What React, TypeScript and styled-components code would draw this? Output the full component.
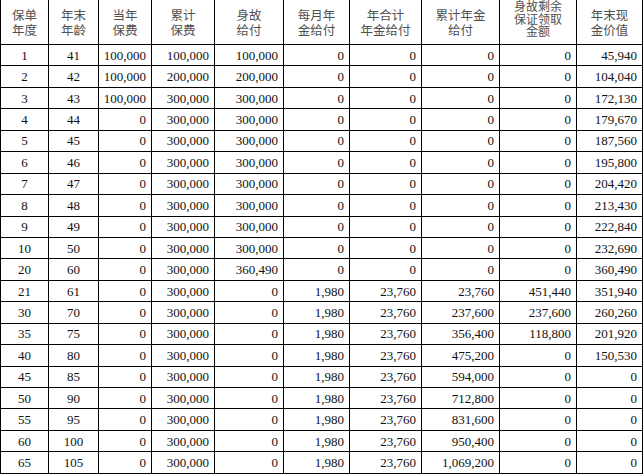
import styled, { createGlobalStyle } from "styled-components";

const GlobalStyle = createGlobalStyle`
  html, body {
    margin: 0;
    padding: 0;
    background: #ffffff;
  }
  body {
    font-family: "Liberation Serif", "Noto Sans CJK SC", serif;
    color: #111111;
  }
`;

const widths = [48, 50, 53, 63, 69, 66, 72, 78, 77, 66];

type Head = { lines: string[]; tight?: boolean };

const heads: Head[] = [
  { lines: ["保单", "年度"] },
  { lines: ["年末", "年龄"] },
  { lines: ["当年", "保费"] },
  { lines: ["累计", "保费"] },
  { lines: ["身故", "给付"] },
  { lines: ["每月年", "金给付"] },
  { lines: ["年合计", "年金给付"] },
  { lines: ["累计年金", "给付"] },
  { lines: ["身故剩余", "保证领取", "金额"], tight: true },
  { lines: ["年末现", "金价值"] },
];

const rows: string[][] = [
  ["1", "41", "100,000", "100,000", "100,000", "0", "0", "0", "0", "45,940"],
  ["2", "42", "100,000", "200,000", "200,000", "0", "0", "0", "0", "104,040"],
  ["3", "43", "100,000", "300,000", "300,000", "0", "0", "0", "0", "172,130"],
  ["4", "44", "0", "300,000", "300,000", "0", "0", "0", "0", "179,670"],
  ["5", "45", "0", "300,000", "300,000", "0", "0", "0", "0", "187,560"],
  ["6", "46", "0", "300,000", "300,000", "0", "0", "0", "0", "195,800"],
  ["7", "47", "0", "300,000", "300,000", "0", "0", "0", "0", "204,420"],
  ["8", "48", "0", "300,000", "300,000", "0", "0", "0", "0", "213,430"],
  ["9", "49", "0", "300,000", "300,000", "0", "0", "0", "0", "222,840"],
  ["10", "50", "0", "300,000", "300,000", "0", "0", "0", "0", "232,690"],
  ["20", "60", "0", "300,000", "360,490", "0", "0", "0", "0", "360,490"],
  ["21", "61", "0", "300,000", "0", "1,980", "23,760", "23,760", "451,440", "351,940"],
  ["30", "70", "0", "300,000", "0", "1,980", "23,760", "237,600", "237,600", "260,260"],
  ["35", "75", "0", "300,000", "0", "1,980", "23,760", "356,400", "118,800", "201,920"],
  ["40", "80", "0", "300,000", "0", "1,980", "23,760", "475,200", "0", "150,530"],
  ["45", "85", "0", "300,000", "0", "1,980", "23,760", "594,000", "0", "0"],
  ["50", "90", "0", "300,000", "0", "1,980", "23,760", "712,800", "0", "0"],
  ["55", "95", "0", "300,000", "0", "1,980", "23,760", "831,600", "0", "0"],
  ["60", "100", "0", "300,000", "0", "1,980", "23,760", "950,400", "0", "0"],
  ["65", "105", "0", "300,000", "0", "1,980", "23,760", "1,069,200", "0", "0"],
];

export default function App() {
  return (
    <>
      <GlobalStyle />
      <Sheet>
        <Table>
          <colgroup>
            {widths.map((w, i) => (
              <col key={i} style={{ width: w }} />
            ))}
          </colgroup>
          <thead>
            <tr>
              {heads.map((h, i) => (
                <HeadCell key={i} $tight={h.tight}>
                  {h.lines.map((l, j) => (
                    <HeadLine key={j} $tight={h.tight}>
                      {l}
                    </HeadLine>
                  ))}
                </HeadCell>
              ))}
            </tr>
          </thead>
          <tbody>
            {rows.map((r, i) => (
              <Row key={i}>
                {r.map((v, j) => (
                  <Cell key={j} $center={j < 2}>
                    {v}
                  </Cell>
                ))}
              </Row>
            ))}
          </tbody>
        </Table>
      </Sheet>
    </>
  );
}

const Sheet = styled.div`
  width: 643px;
  height: 474px;
  overflow: hidden;
`;

const Table = styled.table`
  border-collapse: collapse;
  table-layout: fixed;
  width: 642px;
  margin-top: -1px;
  font-size: 13px;
`;

const HeadCell = styled.th<{ $tight?: boolean }>`
  height: 44px;
  padding: 0;
  border: 1px solid #000;
  font-family: "Noto Sans CJK SC", "Liberation Serif", sans-serif;
  font-weight: 400;
  font-size: ${(p) => (p.$tight ? "12px" : "12.5px")};
  color: #505050;
  text-align: center;
  vertical-align: ${(p) => (p.$tight ? "top" : "middle")};
`;

const HeadLine = styled.div<{ $tight?: boolean }>`
  height: ${(p) => (p.$tight ? "12.5px" : "15px")};
  line-height: ${(p) => (p.$tight ? "12.5px" : "15px")};
  white-space: nowrap;
`;

const Row = styled.tr`
  height: 21.45px;
`;

const Cell = styled.td<{ $center?: boolean }>`
  border: 1px solid #000;
  padding: 0 ${(p) => (p.$center ? "0" : "5px")} 0 0;
  text-align: ${(p) => (p.$center ? "center" : "right")};
  font-family: "Liberation Serif", "Noto Sans CJK SC", serif;
  font-size: 13px;
  line-height: 15px;
  color: #111;
  white-space: nowrap;
  vertical-align: middle;
`;
